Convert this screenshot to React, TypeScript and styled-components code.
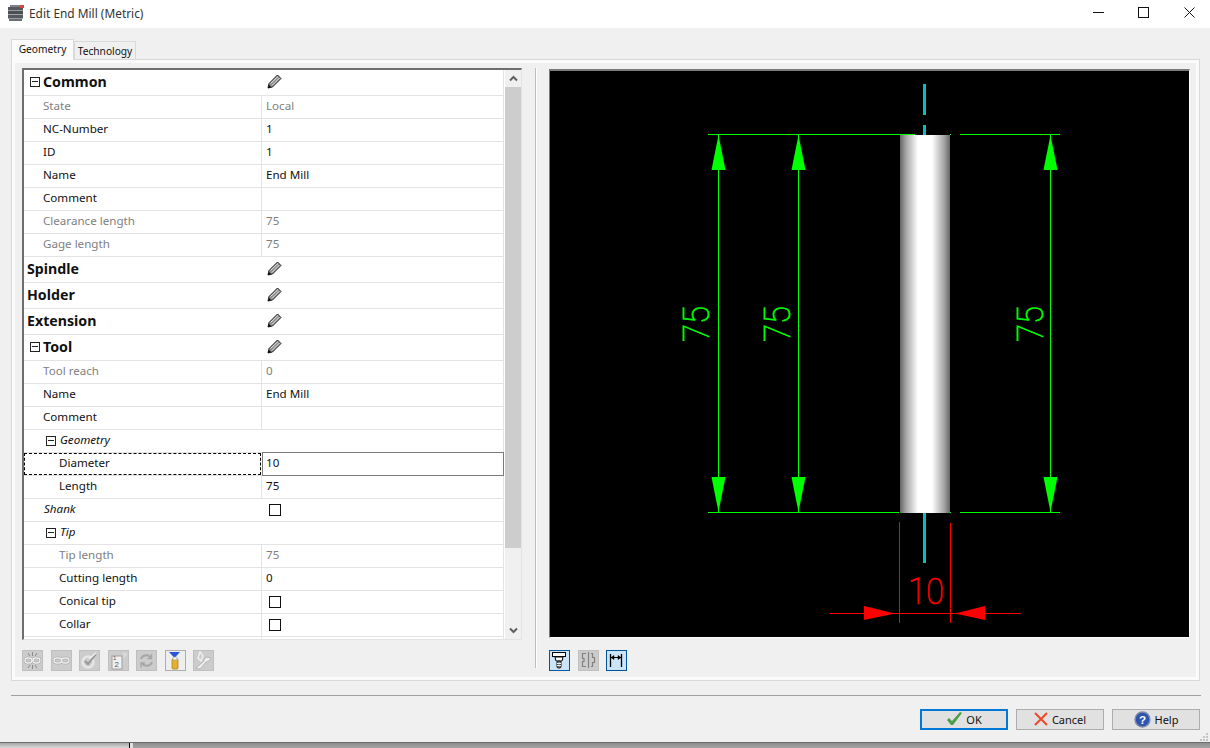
import React from 'react'
import styled, { createGlobalStyle } from 'styled-components'

const GlobalStyle = createGlobalStyle`
    html, body {
        margin: 0;
        padding: 0;
        background: #f0f0f0;
    }
    * {
        box-sizing: border-box;
    }
`

const Window = styled.div`
    width: 1210px;
    height: 748px;
    display: flex;
    flex-direction: column;
    overflow: hidden;
    background: #f0f0f0;
    color: #111;
    font-family: "Noto Sans", "Liberation Sans", sans-serif;
    font-size: 11.6px;
`

const TitleBar = styled.div`
    height: 28px;
    flex: none;
    display: flex;
    align-items: center;
    background: #fff;
    padding: 0 0 3px 8px;
    gap: 5px;
`

const TitleText = styled.span`
    flex: 1;
    color: #333;
    font-size: 11.9px;
    line-height: 24px;
`

const WindowButtons = styled.div`
    display: flex;
    margin-right: -2px;
`

const WindowButton = styled.div`
    width: 45.5px;
    height: 24px;
    display: flex;
    align-items: center;
    justify-content: center;
`

const Body = styled.div`
    flex: 1;
    display: flex;
    flex-direction: column;
    padding: 11px 9px 0 11px;
`

const TabBar = styled.div`
    height: 21px;
    flex: none;
    display: flex;
    align-items: flex-end;
    margin-bottom: -1px;
    position: relative;
    z-index: 1;
`

const Tab = styled.div<{ $active?: boolean }>`
    height: ${p => (p.$active ? 21 : 19)}px;
    width: ${p => (p.$active ? 63 : 62)}px;
    display: flex;
    align-items: center;
    justify-content: center;
    padding-bottom: ${p => (p.$active ? 2 : 0)}px;
    background: ${p => (p.$active ? '#fbfbfb' : '#f0f0f0')};
    border: 1px solid #d9d9d9;
    border-bottom: ${p => (p.$active ? 'none' : '1px solid #d9d9d9')};
    font-size: 10.2px;
`

const Pane = styled.div`
    height: 622px;
    flex: none;
    width: 1189px;
    display: flex;
    padding: 8px 9px 0 10px;
    border: 1px solid #d9d9d9;
    box-shadow: inset 0 0 0 3px #fbfbfb;
`

const LeftColumn = styled.div`
    width: 500px;
    flex: none;
`

const TreePanel = styled.div`
    height: 572px;
    display: flex;
    overflow: hidden;
    border-top: 2px solid #6e6e6e;
    border-left: 2px solid #6e6e6e;
    border-right: 1px solid #e3e3e3;
    border-bottom: 1px solid #e3e3e3;
    background: #fff;
`

const TreeRows = styled.div`
    width: 480px;
    flex: none;
    overflow: hidden;
`

const Row = styled.div<{ $section?: boolean }>`
    height: ${p => (p.$section ? 26 : 23)}px;
    display: grid;
    grid-template-columns: 237px 1fr;
    border-bottom: 1px solid #e3e3e3;
    border-right: 1px solid #e3e3e3;
`

const LabelCell = styled.div<{ $indent: number; $disabled?: boolean; $italic?: boolean; $section?: boolean; $focused?: boolean }>`
    display: flex;
    align-items: center;
    gap: ${p => (p.$section ? 3 : 4)}px;
    padding-left: ${p => p.$indent}px;
    padding-bottom: ${p => (p.$section ? 2 : 4)}px;
    color: ${p => (p.$disabled ? '#808080' : '#111')};
    font-style: ${p => (p.$italic ? 'italic' : 'normal')};
    font-weight: ${p => (p.$section ? 700 : 400)};
    font-size: ${p => (p.$section ? 14.2 : 11.6)}px;
    outline: ${p => (p.$focused ? '1px dashed #000' : 'none')};
    outline-offset: -1px;
`

const ValueCell = styled.div<{ $divider?: boolean; $disabled?: boolean; $editing?: boolean; $section?: boolean }>`
    display: flex;
    align-items: center;
    margin-left: ${p => (p.$editing ? 2 : 0)}px;
    padding-left: ${p => (p.$editing ? 2 : 4)}px;
    padding-bottom: ${p => (p.$section ? 2 : 4)}px;
    border-left: 1px solid ${p => (p.$divider && !p.$editing ? '#e3e3e3' : 'transparent')};
    color: ${p => (p.$disabled ? '#808080' : '#111')};
    outline: ${p => (p.$editing ? '1px solid #7a7a7a' : 'none')};
`

const Expander = styled.span<{ $section?: boolean }>`
    width: 10px;
    height: 10px;
    flex: none;
    margin-top: ${p => (p.$section ? 0 : 3)}px;
    border: 1px solid #222;
    display: flex;
    align-items: center;
    justify-content: center;
    &::before {
        content: "";
        width: 6px;
        height: 1px;
        background: #222;
    }
`

const CheckBox = styled.span`
    width: 12px;
    height: 12px;
    margin: 4px 0 0 3px;
    border: 1px solid #111;
    background: #fff;
`

const PencilSlot = styled.span`
    display: flex;
    margin-left: 1px;
`

const ScrollBar = styled.div`
    width: 16px;
    margin-left: 1px;
    display: flex;
    flex-direction: column;
    background: #f0f0f0;
`

const ScrollArrow = styled.div`
    height: 17px;
    flex: none;
    display: flex;
    align-items: center;
    justify-content: center;
`

const ScrollTrack = styled.div`
    flex: 1;
`

const ScrollThumb = styled.div`
    height: 461px;
    background: #cdcdcd;
`

const Toolbar = styled.div<{ $top: number; $gap: number }>`
    display: flex;
    gap: ${p => p.$gap}px;
    margin-top: ${p => p.$top}px;
`

const ToolButton = styled.div<{ $state: 'off' | 'on' | 'checked' }>`
    width: 21px;
    height: 21px;
    display: flex;
    align-items: center;
    justify-content: center;
    border: 1px solid ${p => (p.$state === 'checked' ? '#005499' : p.$state === 'on' ? '#adadad' : '#bfbfbf')};
    background: ${p => (p.$state === 'checked' ? '#cce4f7' : p.$state === 'on' ? '#eeeeee' : '#cccccc')};
`

const Splitter = styled.div`
    width: 2px;
    height: 600px;
    flex: none;
    margin: 0 12px 0 13px;
    background: #bdbdbd;
    border-right: 1px solid #fff;
`

const RightColumn = styled.div`
    width: 641px;
    flex: none;
    padding-top: 1px;
`

const Canvas = styled.div`
    height: 569px;
    background: #000;
    border-top: 2px solid #7a7a7a;
    border-left: 1px solid #7a7a7a;
    border-right: 1px solid #fff;
    border-bottom: 1px solid #fff;
    overflow: hidden;
`

const Drawing = styled.svg`
    display: block;
    width: 639px;
    height: 566px;
`

const DimensionText = styled.text`
    font-family: Roboto, "Liberation Sans", sans-serif;
    font-weight: 100;
    font-size: 37px;
`

const Separator = styled.div`
    height: 1px;
    flex: none;
    margin: 14px 0 0 0;
    width: 1190px;
    background: #a0a0a0;
`

const Footer = styled.div`
    display: flex;
    justify-content: flex-end;
    gap: 8px;
    padding-top: 13px;
    width: 1189px;
    position: relative;
`

const DialogButton = styled.div<{ $primary?: boolean }>`
    width: 88px;
    height: 21px;
    display: flex;
    align-items: center;
    justify-content: center;
    gap: 4px;
    padding-bottom: 1px;
    font-size: 11px;
    background: #e1e1e1;
    border: ${p => (p.$primary ? '2px solid #0078d7' : '1px solid #adadad')};
`

const SizeGrip = styled.svg`
    position: absolute;
    right: -9px;
    top: 37px;
`

const BottomEdge = styled.div`
    height: 6px;
    flex: none;
    display: grid;
    grid-template-columns: 129px 1px 3px 1fr;
    border-top: 1px solid #6c6c6c;
`

const EdgeLeft = styled.div`
    background: linear-gradient(#a8a8a8, #d8d8d8);
`

const EdgeLine = styled.div`
    background: #111;
`

const EdgeGap = styled.div`
    background: #e0e0e0;
`

const EdgeRight = styled.div`
    background: linear-gradient(#8e8e8e, #a4a4a4);
`

const AppIcon = () => (
    <svg width="16" height="16" viewBox="0 0 16 16">
        <rect x="0" y="2" width="15" height="3" fill="#55595e" />
        <rect x="0" y="5" width="15" height="1" fill="#9a9da0" />
        <rect x="0" y="6" width="15" height="3" fill="#4b4f54" />
        <rect x="0" y="9" width="15" height="1" fill="#a2a5a8" />
        <rect x="0" y="10" width="15" height="3" fill="#55595e" />
        <rect x="0" y="13" width="15" height="1" fill="#9a9da0" />
        <rect x="1" y="14" width="13" height="2" fill="#6a6e72" />
        <rect x="2" y="0" width="11" height="2" fill="#7d8185" />
        <rect x="12" y="0" width="4" height="3" fill="#d8453e" />
    </svg>
)

const Pencil = () => (
    <svg width="15" height="15" viewBox="0 0 15 15">
        <path d="M1 14 L2 9.5 L10.5 1 L14 4.5 L5.5 13 Z" fill="#8c8c8c" stroke="#222" strokeWidth="1" strokeLinejoin="round" />
        <path d="M3.5 9.5 L11 2.5 M5 11.5 L12.5 4" stroke="#e6e6e6" strokeWidth="1" />
        <path d="M1 14 L2 11 L4 13 Z" fill="#000" />
    </svg>
)

const Chevron = ({ down }: { down?: boolean }) => (
    <svg width="9" height="7" viewBox="0 0 9 7">
        <path d={down ? 'M1 1.5 L4.5 5 L8 1.5' : 'M1 5.5 L4.5 2 L8 5.5'} fill="none" stroke="#606060" strokeWidth="2" />
    </svg>
)

const iconLine = { fill: 'none', stroke: '#f0f0f0', strokeWidth: 1.4 }

const leftTools: { state: 'off' | 'on'; icon: React.ReactNode }[] = [
    {
        state: 'off',
        icon: (
            <g {...iconLine}>
                <rect x="2" y="7" width="7" height="5" rx="2.4" stroke="#9c9c9c" strokeWidth="2.4" />
                <rect x="10" y="7" width="7" height="5" rx="2.4" stroke="#9c9c9c" strokeWidth="2.4" />
                <rect x="2" y="7" width="7" height="5" rx="2.4" />
                <rect x="10" y="7" width="7" height="5" rx="2.4" />
                <path d="M9.5 1v4M9.5 14v4M5 2l2 3M14 2l-2 3M5 17l2-3M14 17l-2-3" stroke="#8c8c8c" strokeWidth="1" />
            </g>
        ),
    },
    {
        state: 'off',
        icon: (
            <g {...iconLine}>
                <rect x="2" y="7" width="7.5" height="5" rx="2.4" stroke="#9c9c9c" strokeWidth="2.4" />
                <rect x="9.5" y="7" width="7.5" height="5" rx="2.4" stroke="#9c9c9c" strokeWidth="2.4" />
                <rect x="2" y="7" width="7.5" height="5" rx="2.4" />
                <rect x="9.5" y="7" width="7.5" height="5" rx="2.4" />
            </g>
        ),
    },
    {
        state: 'off',
        icon: (
            <g {...iconLine}>
                <circle cx="8" cy="11" r="5.5" stroke="#e6e6e6" strokeWidth="2.4" />
                <path d="M5 10l3 3 8-10" stroke="#989898" strokeWidth="2" />
                <path d="M9 8l7-6" />
            </g>
        ),
    },
    {
        state: 'off',
        icon: (
            <g>
                <rect x="3" y="5" width="10" height="13" fill="#f0f0f0" stroke="#a0a0a0" />
                <text x="5.5" y="16" fontSize="8" fontFamily="Liberation Sans" fill="#555">2</text>
                <text x="4" y="9" fontSize="6" fontFamily="Liberation Sans" fill="#555">1</text>
                <text x="13" y="7" fontSize="8" fontFamily="Liberation Sans" fill="#f0f0f0">?</text>
            </g>
        ),
    },
    {
        state: 'off',
        icon: (
            <g fill="none" stroke="#a6a6a6" strokeWidth="2">
                <path d="M4 8a5.5 5.5 0 0 1 10-1" />
                <path d="M15 11a5.5 5.5 0 0 1-10 1" />
                <path d="M14.5 3v4.5h-4M4 16.5V12h4" strokeWidth="1.4" />
            </g>
        ),
    },
    {
        state: 'on',
        icon: (
            <g>
                <path d="M3 1h11L8.5 7Z" fill="#2a55d8" />
                <rect x="6" y="8" width="6" height="10" rx="1" fill="#e6b12c" stroke="#a37a18" strokeWidth="0.7" />
                <rect x="7" y="6" width="4" height="3" fill="#f0efe6" stroke="#999" strokeWidth="0.5" />
            </g>
        ),
    },
    {
        state: 'off',
        icon: (
            <g>
                <path d="M6 1l3 4-2 5-3-3Z" fill="none" stroke="#f0f0f0" strokeWidth="1.4" />
                <path d="M2 17l7-6 3-5 5 1-2 3-3 1-6 7Z" fill="#f0f0f0" stroke="#a8a8a8" strokeWidth="0.7" />
            </g>
        ),
    },
]

const rightTools: { state: 'off' | 'checked'; icon: React.ReactNode }[] = [
    {
        state: 'checked',
        icon: (
            <g>
                <rect x="2.5" y="1.5" width="13" height="4" fill="#fff" stroke="#000" />
                <path d="M5 6h8l-1 4H6Z" fill="#fff" stroke="#000" strokeWidth="1" />
                <rect x="7" y="10" width="4" height="7" rx="1.5" fill="#777" stroke="#111" />
                <path d="M7 12.5h4M7 14.5h4" stroke="#eee" />
            </g>
        ),
    },
    {
        state: 'off',
        icon: (
            <g fill="none" stroke="#808080" strokeWidth="1.2">
                <path d="M9.5 1v16" />
                <path d="M7 2.5H3.5v5H5v3H3.5v5H7" />
                <path d="M12 2.5h1.5v4h2v5h-2v4H12" />
            </g>
        ),
    },
    {
        state: 'checked',
        icon: (
            <g fill="none" stroke="#000" strokeWidth="1.3">
                <path d="M3.5 3v13M14.5 3v13" />
                <path d="M3.5 6.5h11" strokeWidth="1" />
                <path d="M4 6.5l3-2v4ZM14 6.5l-3-2v4Z" fill="#000" strokeWidth="0.5" />
            </g>
        ),
    },
]

type RowData = {
    label: string
    value?: string
    indent: number
    kind?: 'section' | 'group' | 'check'
    expand?: boolean
    disabled?: boolean
    italic?: boolean
    focused?: boolean
    noDivider?: boolean
}

const rows: RowData[] = [
    { label: 'Common', indent: 6, kind: 'section', expand: true },
    { label: 'State', value: 'Local', indent: 19, disabled: true },
    { label: 'NC-Number', value: '1', indent: 19 },
    { label: 'ID', value: '1', indent: 19 },
    { label: 'Name', value: 'End Mill', indent: 19 },
    { label: 'Comment', indent: 19 },
    { label: 'Clearance length', value: '75', indent: 19, disabled: true },
    { label: 'Gage length', value: '75', indent: 19, disabled: true },
    { label: 'Spindle', indent: 3, kind: 'section' },
    { label: 'Holder', indent: 3, kind: 'section' },
    { label: 'Extension', indent: 3, kind: 'section' },
    { label: 'Tool', indent: 6, kind: 'section', expand: true },
    { label: 'Tool reach', value: '0', indent: 19, disabled: true },
    { label: 'Name', value: 'End Mill', indent: 19 },
    { label: 'Comment', indent: 19 },
    { label: 'Geometry', indent: 22, kind: 'group', expand: true, italic: true, noDivider: true },
    { label: 'Diameter', value: '10', indent: 35, focused: true },
    { label: 'Length', value: '75', indent: 35 },
    { label: 'Shank', indent: 20, kind: 'check', italic: true, noDivider: true },
    { label: 'Tip', indent: 22, kind: 'group', expand: true, italic: true, noDivider: true },
    { label: 'Tip length', value: '75', indent: 35, disabled: true },
    { label: 'Cutting length', value: '0', indent: 35 },
    { label: 'Conical tip', indent: 35, kind: 'check' },
    { label: 'Collar', indent: 35, kind: 'check' },
    { label: '', indent: 35 },
]

const GREEN = '#00ff00'
const RED = '#ff0000'
const CYAN = '#00c0c8'

const LengthDimension = ({ x, textX }: { x: number; textX: number }) => (
    <g>
        <line x1={x} y1={135} x2={x} y2={512} stroke={GREEN} strokeWidth="1" />
        <polygon points={`${x},135 ${x + 7},170 ${x - 7},170`} fill={GREEN} />
        <polygon points={`${x},512 ${x + 7},477 ${x - 7},477`} fill={GREEN} />
        <DimensionText
            transform={`translate(${textX} 342) rotate(-90)`}
            fill={GREEN}
            stroke={GREEN}
            strokeWidth="0.7"
            textLength="36"
            lengthAdjust="spacingAndGlyphs"
        >
            75
        </DimensionText>
    </g>
)

const ToolDrawing = () => (
    <Drawing viewBox="550 71 639 566">
        <defs>
            <linearGradient id="shank" x1="0" x2="1" y1="0" y2="0">
                <stop offset="0" stopColor="#666" />
                <stop offset="0.12" stopColor="#a5a5a5" />
                <stop offset="0.36" stopColor="#fff" />
                <stop offset="0.64" stopColor="#fff" />
                <stop offset="0.88" stopColor="#a5a5a5" />
                <stop offset="1" stopColor="#666" />
            </linearGradient>
        </defs>
        <rect x="923" y="84" width="3" height="31" fill={CYAN} />
        <rect x="923" y="125" width="3" height="10" fill={CYAN} />
        <rect x="923" y="513" width="3" height="50" fill={CYAN} />
        <path d="M708 134.5H915M950 134.5H951M960 134.5H1060" stroke={GREEN} strokeWidth="1" />
        <path d="M708 512.5H899M950 512.5H951M960 512.5H1060" stroke={GREEN} strokeWidth="1" />
        <LengthDimension x={718.5} textX={709} />
        <LengthDimension x={798.5} textX={790} />
        <LengthDimension x={1050.5} textX={1043} />
        <rect x="900" y="135" width="50" height="378" fill="url(#shank)" />
        <path d="M899.5 522V623M950.5 523V623M830 613.5H1021" stroke={RED} strokeWidth="1" />
        <polygon points="864,606 895,613.5 864,620" fill={RED} />
        <polygon points="985,606 955,613.5 985,620" fill={RED} />
        <DimensionText x="908" y="604" fill={RED} stroke={RED} strokeWidth="0.7" textLength="36" lengthAdjust="spacingAndGlyphs">
            10
        </DimensionText>
    </Drawing>
)

const TreeRow = ({ row }: { row: RowData }) => {
    const section = row.kind === 'section'
    const showDivider = !section && !row.noDivider
    return (
        <Row $section={section}>
            <LabelCell
                $indent={row.indent}
                $disabled={row.disabled}
                $italic={row.italic}
                $section={section}
                $focused={row.focused}
            >
                {row.expand && <Expander $section={section} />}
                {row.label}
            </LabelCell>
            <ValueCell $divider={showDivider} $disabled={row.disabled} $editing={row.focused} $section={section}>
                {section && (
                    <PencilSlot>
                        <Pencil />
                    </PencilSlot>
                )}
                {row.kind === 'check' && <CheckBox />}
                {row.value}
            </ValueCell>
        </Row>
    )
}

export default function App() {
    return (
        <Window>
            <GlobalStyle />
            <TitleBar>
                <AppIcon />
                <TitleText>Edit End Mill (Metric)</TitleText>
                <WindowButtons>
                    <WindowButton>
                        <svg width="11" height="11" viewBox="0 0 11 11">
                            <path d="M0 5.5H11" stroke="#111" />
                        </svg>
                    </WindowButton>
                    <WindowButton>
                        <svg width="11" height="11" viewBox="0 0 11 11">
                            <rect x="0.5" y="0.5" width="10" height="10" fill="none" stroke="#111" />
                        </svg>
                    </WindowButton>
                    <WindowButton>
                        <svg width="11" height="11" viewBox="0 0 11 11">
                            <path d="M0.5 0.5L10.5 10.5M10.5 0.5L0.5 10.5" stroke="#111" />
                        </svg>
                    </WindowButton>
                </WindowButtons>
            </TitleBar>
            <Body>
                <TabBar>
                    <Tab $active>Geometry</Tab>
                    <Tab>Technology</Tab>
                </TabBar>
                <Pane>
                    <LeftColumn>
                        <TreePanel>
                            <TreeRows>
                                {rows.map((row, i) => (
                                    <TreeRow key={i} row={row} />
                                ))}
                            </TreeRows>
                            <ScrollBar>
                                <ScrollArrow>
                                    <Chevron />
                                </ScrollArrow>
                                <ScrollThumb />
                                <ScrollTrack />
                                <ScrollArrow>
                                    <Chevron down />
                                </ScrollArrow>
                            </ScrollBar>
                        </TreePanel>
                        <Toolbar $top={10} $gap={7.5}>
                            {leftTools.map((tool, i) => (
                                <ToolButton key={i} $state={tool.state}>
                                    <svg width="19" height="19" viewBox="0 0 19 19">
                                        {tool.icon}
                                    </svg>
                                </ToolButton>
                            ))}
                        </Toolbar>
                    </LeftColumn>
                    <Splitter />
                    <RightColumn>
                        <Canvas>
                            <ToolDrawing />
                        </Canvas>
                        <Toolbar $top={12} $gap={7.5}>
                            {rightTools.map((tool, i) => (
                                <ToolButton key={i} $state={tool.state}>
                                    <svg width="19" height="19" viewBox="0 0 19 19">
                                        {tool.icon}
                                    </svg>
                                </ToolButton>
                            ))}
                        </Toolbar>
                    </RightColumn>
                </Pane>
                <Separator />
                <Footer>
                    <DialogButton $primary>
                        <svg width="16" height="14" viewBox="0 0 16 14">
                            <path d="M1 8l2-2 3 3 8-9 2 1-9 12h-2Z" fill="#4da04a" />
                        </svg>
                        OK
                    </DialogButton>
                    <DialogButton>
                        <svg width="14" height="14" viewBox="0 0 14 14">
                            <path d="M1 1L13 13M13 1L1 13" stroke="#ea4a2a" strokeWidth="2" />
                        </svg>
                        Cancel
                    </DialogButton>
                    <DialogButton>
                        <svg width="17" height="17" viewBox="0 0 16 16">
                            <circle cx="8" cy="8" r="7" fill="#2c54b0" stroke="#7d8aa8" strokeWidth="1.4" />
                            <text x="8" y="12" fontSize="11" fontWeight="700" textAnchor="middle" fontFamily="'Liberation Sans', sans-serif" fill="#fff">
                                ?
                            </text>
                        </svg>
                        Help
                    </DialogButton>
                    <SizeGrip width="9" height="9" viewBox="0 0 9 9">
                        <path d="M6 0h2v2H6ZM3 3h2v2H3ZM6 3h2v2H6ZM0 6h2v2H0ZM3 6h2v2H3ZM6 6h2v2H6Z" fill="#c4c4c4" />
                    </SizeGrip>
                </Footer>
            </Body>
            <BottomEdge>
                <EdgeLeft />
                <EdgeLine />
                <EdgeGap />
                <EdgeRight />
            </BottomEdge>
        </Window>
    )
}
